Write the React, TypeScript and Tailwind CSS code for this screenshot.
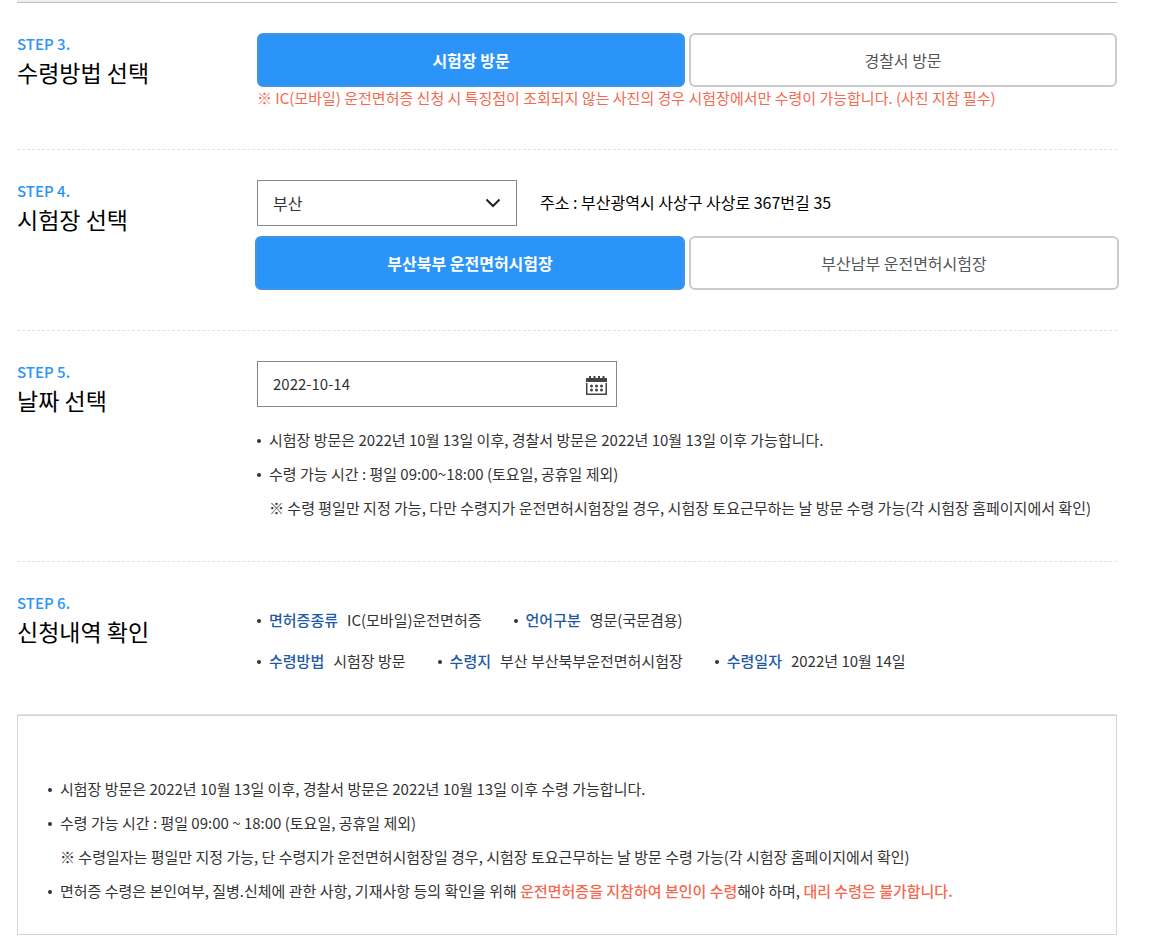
import { useState, type ReactNode } from "react";

function Step({ no, title, last, children }: { no: number; title: string; last?: boolean; children: ReactNode }) {
  return (
    <section
      className={
        last
          ? "flex border-b border-solid border-[#e2e2e2] pt-[30px] pb-[33px]"
          : "flex border-b border-dashed border-[#e2e2e2] pt-[30px]"
      }
    >
      <h2 className="w-60 shrink-0">
        <span className="block text-[15px] leading-[22px] font-medium text-[#2a94f9]">STEP {no}.</span>
        <span className="block text-[23px] leading-[34px] font-normal text-black">{title}</span>
      </h2>
      <div className="min-w-0 flex-1">{children}</div>
    </section>
  );
}

function Choices({ name, options, wide }: { name: string; options: string[]; wide?: boolean }) {
  const [picked, setPicked] = useState(0);
  return (
    <div role="group" aria-label={name} className={wide ? "-mx-[2px] mt-[10px] flex gap-1" : "flex gap-1"}>
      {options.map((label, i) => (
        <button
          key={label}
          type="button"
          aria-pressed={i === picked}
          onClick={() => setPicked(i)}
          className={
            i === picked
              ? "h-[54px] flex-1 rounded-md border-2 border-[#4095e5] bg-[#2a94f9] text-base font-bold text-white"
              : "h-[54px] flex-1 rounded-md border-2 border-[#cacaca] bg-white text-base text-[#555]"
          }
        >
          {label}
        </button>
      ))}
    </div>
  );
}

function Bullet({ hidden }: { hidden?: boolean }) {
  return (
    <span
      className={
        hidden ? "mt-[2px] mr-2 size-1 shrink-0" : "mt-[2px] mr-2 size-1 shrink-0 rounded-full bg-[#333]"
      }
    />
  );
}

function Note({ plain, children }: { plain?: boolean; children: ReactNode }) {
  return (
    <li className="flex items-center text-[15px] leading-[34px]">
      <Bullet hidden={plain} />
      <span>{children}</span>
    </li>
  );
}

function Item({ label, value }: { label: string; value: string }) {
  return (
    <div className="flex items-center text-[15px] leading-[41px]">
      <Bullet />
      <dt className="mr-[9px] font-medium text-[#1f5aa8]">{label}</dt>
      <dd>{value}</dd>
    </div>
  );
}

function CalendarIcon() {
  return (
    <svg width="21" height="19" viewBox="0 0 21 19" fill="#444" aria-hidden="true">
      <path d="M3 0h2v2h2.500V0h2v2H12V0h2v2h2.500V0h2v2H21v4H0V2h3z" />
      <path d="M0 7h1.500v10.500h18V7H21v12H0z" />
      <circle cx="5.500" cy="10" r="1.500" />
      <circle cx="10.500" cy="10" r="1.500" />
      <circle cx="15.500" cy="10" r="1.500" />
      <circle cx="5.500" cy="14" r="1.500" />
      <circle cx="10.500" cy="14" r="1.500" />
      <circle cx="15.500" cy="14" r="1.500" />
    </svg>
  );
}

export default function App() {
  const [date, setDate] = useState("2022-10-14");
  return (
    <main className="bg-white pr-[33px] pb-[2px] pl-[17px] font-['Noto_Sans_CJK_KR',sans-serif] text-[#333]">
      <div className="border-b border-[#c0c0c0]">
        <div className="h-[2px] w-[143px] bg-[#eeeeee]" />
      </div>

      <Step no={3} title="수령방법 선택">
        <Choices name="수령방법 선택" options={["시험장 방문", "경찰서 방문"]} />
        <p className="mb-10 text-[15px] leading-[22px] text-[#f4694f]">
          ※ IC(모바일) 운전면허증 신청 시 특징점이 조회되지 않는 사진의 경우 시험장에서만 수령이 가능합니다. (사진 지참 필수)
        </p>
      </Step>

      <Step no={4} title="시험장 선택">
        <div className="flex items-center gap-[23px]">
          <div className="relative w-[260px]">
            <select
              aria-label="지역"
              className="block h-[46px] w-full appearance-none border border-[#888] bg-white px-[15px] text-base text-[#333]"
            >
              <option>부산</option>
            </select>
            <svg
              className="pointer-events-none absolute top-[17px] right-4"
              width="16"
              height="12"
              viewBox="0 0 16 12"
              fill="none"
              stroke="#222"
              strokeWidth="2"
              aria-hidden="true"
            >
              <path d="M1.500 2.500 8 9l6.500-6.500" />
            </svg>
          </div>
          <p className="pb-[2px] text-base text-black">주소 : 부산광역시 사상구 사상로 367번길 35</p>
        </div>
        <Choices name="시험장 선택" wide options={["부산북부 운전면허시험장", "부산남부 운전면허시험장"]} />
        <div className="h-10" />
      </Step>

      <Step no={5} title="날짜 선택">
        <div className="flex h-[46px] w-[360px] items-center border border-[#888] pr-[9px]">
          <input
            type="text"
            aria-label="날짜"
            value={date}
            onChange={(e) => setDate(e.target.value)}
            className="h-full min-w-0 flex-1 px-[15px] pb-[2px] text-[15px] outline-none"
          />
          <button type="button" aria-label="달력 열기" className="pt-[3px]">
            <CalendarIcon />
          </button>
        </div>
        <ul className="mt-4 mb-9">
          <Note>시험장 방문은 2022년 10월 13일 이후, 경찰서 방문은 2022년 10월 13일 이후 가능합니다.</Note>
          <Note>수령 가능 시간 : 평일 09:00~18:00 (토요일, 공휴일 제외)</Note>
          <Note plain>
            ※ 수령 평일만 지정 가능, 다만 수령지가 운전면허시험장일 경우, 시험장 토요근무하는 날 방문 수령 가능(각 시험장 홈페이지에서 확인)
          </Note>
        </ul>
      </Step>

      <Step no={6} title="신청내역 확인" last>
        <dl className="pt-[7px]">
          <div className="flex gap-8">
            <Item label="면허증종류" value="IC(모바일)운전면허증" />
            <Item label="언어구분" value="영문(국문겸용)" />
          </div>
          <div className="flex gap-8">
            <Item label="수령방법" value="시험장 방문" />
            <Item label="수령지" value="부산 부산북부운전면허시험장" />
            <Item label="수령일자" value="2022년 10월 14일" />
          </div>
        </dl>
      </Step>

      <ul className="border border-[#d4d4d4] px-[30px] pt-14 pb-[26px]">
        <Note>시험장 방문은 2022년 10월 13일 이후, 경찰서 방문은 2022년 10월 13일 이후 수령 가능합니다.</Note>
        <Note>수령 가능 시간 : 평일 09:00 ~ 18:00 (토요일, 공휴일 제외)</Note>
        <Note plain>
          ※ 수령일자는 평일만 지정 가능, 단 수령지가 운전면허시험장일 경우, 시험장 토요근무하는 날 방문 수령 가능(각 시험장 홈페이지에서 확인)
        </Note>
        <Note>
          면허증 수령은 본인여부, 질병.신체에 관한 사항, 기재사항 등의 확인을 위해{" "}
          <strong className="font-medium text-[#f4694f]">운전면허증을 지참하여 본인이 수령</strong>해야 하며,{" "}
          <strong className="font-medium text-[#f4694f]">대리 수령은 불가합니다.</strong>
        </Note>
      </ul>
    </main>
  );
}
